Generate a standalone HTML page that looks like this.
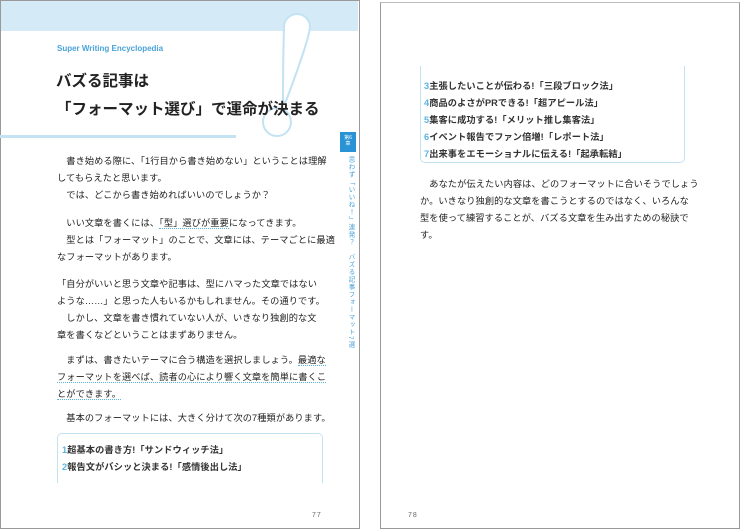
<!DOCTYPE html>
<html><head><meta charset="utf-8"><style>
*{margin:0;padding:0;box-sizing:border-box}
body{width:740px;height:529px;background:#fff;position:relative;overflow:hidden;font-family:"Liberation Sans","Noto Sans CJK JP",sans-serif;color:#222}
.a{position:absolute;white-space:nowrap}
.t{font-size:9.2px;line-height:17px;letter-spacing:0.1px}
.u{border-bottom:1.5px dotted #5ab4e0}
.n{color:#5ab4e0}
</style></head><body>
<!-- left page -->
<div class="a" style="left:0;top:0;width:360px;height:529px;border:1.5px solid #999;border-top:1px solid #999"></div>
<div class="a" style="left:1px;top:1px;width:357px;height:30px;background:#d4ebf7"></div>
<div class="a" style="left:0;top:135px;width:236px;height:3px;background:#c3e2f2"></div>
<svg class="a" style="left:250px;top:8px" width="70" height="135" viewBox="250 8 70 135">
<path d="M284 27 A13 13 0 0 1 310 27 Q309 40 286 101 Q283 104 283 100 Q283 60 284 27 Z" fill="#fff" stroke="#c3e2f2" stroke-width="2"/>
<circle cx="277" cy="122" r="14" fill="#fff" stroke="#c3e2f2" stroke-width="2"/>
</svg>
<div class="a" style="left:57px;top:44px;font-size:8px;color:#4aa3d8;font-weight:bold">Super Writing Encyclopedia</div>
<div class="a" style="left:56px;top:68px;font-size:15.5px;line-height:28px;font-weight:bold;color:#222;letter-spacing:0">バズる記事は<br>「フォーマット選び」で運命が決まる</div>
<div class="a" style="left:340px;top:132px;width:16px;height:20px;background:#2a93d5;color:#fff;font-size:5px;text-align:center;padding-top:3px;line-height:6px">第6<br>章</div>
<div class="a" style="left:345px;top:156px;writing-mode:vertical-rl;font-size:6.5px;color:#4aa3d8;letter-spacing:1px">思わず「いいね！」連発？　バズる記事フォーマット7選</div>
<div class="a t" style="left:57px;top:153px">　書き始める際に、「1行目から書き始めない」ということは理解<br>してもらえたと思います。<br>　では、どこから書き始めればいいのでしょうか？</div>
<div class="a t" style="left:57px;top:215px">　いい文章を書くには、<span class="u">「型」選びが重要</span>になってきます。<br>　型とは「フォーマット」のことで、文章には、テーマごとに最適<br>なフォーマットがあります。</div>
<div class="a t" style="left:57px;top:276px">「自分がいいと思う文章や記事は、型にハマった文章ではない<br>ような……」と思った人もいるかもしれません。その通りです。<br>　しかし、文章を書き慣れていない人が、いきなり独創的な文<br>章を書くなどということはまずありません。</div>
<div class="a t" style="left:57px;top:352px">　まずは、書きたいテーマに合う構造を選択しましょう。<span class="u">最適な</span><br><span class="u">フォーマットを選べば、読者の心により響く文章を簡単に書くこ</span><br><span class="u">とができます。</span></div>
<div class="a t" style="left:57px;top:410px">　基本のフォーマットには、大きく分けて次の7種類があります。</div>
<div class="a" style="left:57px;top:433px;width:266px;height:50px;border:1.5px solid #c3e2f2;border-bottom:none;border-radius:5px 5px 0 0"></div>
<div class="a" style="left:58px;top:477px;width:264px;height:10px;background:#fff"></div>
<div class="a t" style="left:62px;top:442px;font-weight:bold;color:#333"><span class="n">1</span>超基本の書き方!「サンドウィッチ法」<br><span class="n">2</span>報告文がバシッと決まる!「感情後出し法」</div>
<div class="a" style="left:312px;top:512px;font-size:7px;color:#666;letter-spacing:1px">77</div>
<!-- right page -->
<div class="a" style="left:380px;top:2px;width:360px;height:527px;border:1.5px solid #999;border-top:1px solid #bbb"></div>
<div class="a" style="left:420px;top:66px;width:265px;height:97px;border:1.5px solid #c3e2f2;border-top:none;border-radius:0 0 5px 5px"></div>
<div class="a t" style="left:424px;top:78px;font-weight:bold;color:#333"><span class="n">3</span>主張したいことが伝わる!「三段ブロック法」<br><span class="n">4</span>商品のよさがPRできる!「超アピール法」<br><span class="n">5</span>集客に成功する!「メリット推し集客法」<br><span class="n">6</span>イベント報告でファン倍増!「レポート法」<br><span class="n">7</span>出来事をエモーショナルに伝える!「起承転結」</div>
<div class="a t" style="left:420px;top:176px">　あなたが伝えたい内容は、どのフォーマットに合いそうでしょう<br>か。いきなり独創的な文章を書こうとするのではなく、いろんな<br>型を使って練習することが、バズる文章を生み出すための秘訣で<br>す。</div>
<div class="a" style="left:408px;top:512px;font-size:7px;color:#666;letter-spacing:1px">78</div>
</body></html>
